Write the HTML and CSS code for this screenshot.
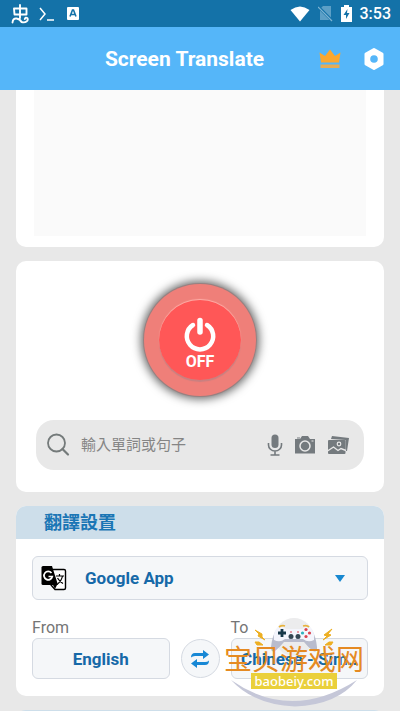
FILE: index.html
```html
<!DOCTYPE html>
<html lang="zh-Hant">
<head>
<meta charset="utf-8">
<meta name="viewport" content="width=device-width, initial-scale=1">
<title>Screen Translate</title>
<link rel="stylesheet" href="styles.css">
</head>
<body>
<div class="status">
  <div class="status-group">
    <svg width="18" height="20" viewBox="0 0 18 20" fill="none" stroke="#fff" stroke-width="1.900" stroke-linecap="round" stroke-linejoin="round"><path d="M9 1v13M3 4.500h12.500v6H3.500zM1.500 18.500Q2 14 5.500 14.500T10.500 18q3 1 5-.5t.8-3.500q-1.800-1-2.500 1"/></svg>
    <svg width="16" height="14" viewBox="0 0 16 14" fill="none" stroke="#fff" stroke-width="1.500"><path d="M1 1l5 6-5 6M8 13h7"/></svg>
    <svg class="status-app" width="12" height="13" viewBox="0 0 12 13"><rect width="12" height="13" rx="1" fill="#fff"/><path d="M3 9.500L5.500 3h1L9 9.500M4 7.500h4" fill="none" stroke="#1472a8" stroke-width="1.600"/></svg>
  </div>
  <div class="status-group status-right">
    <svg width="20" height="16" viewBox="0 0 20 16"><path d="M0.500 4Q10-3 19.500 4L10 15.500z" fill="#fff"/></svg>
    <svg width="15" height="17" viewBox="0 0 15 17"><path d="M5 1h8v14H2V4z" fill="#5c9fc6"/><path d="M0 1.500L14.500 16" stroke="#1472a8" stroke-width="3"/><path d="M0 2L14 16" stroke="#7db3d2" stroke-width="1.200"/></svg>
    <svg width="11" height="17" viewBox="0 0 11 17"><path d="M3 0h5v2h3v15H0V2h3z" fill="#fff"/><path d="M6.500 4L2.500 10h2.500v4L8.500 8H6z" fill="#1472a8"/></svg>
    <span class="clock">3:53</span>
  </div>
</div>
<header class="topbar">
  <h1 class="title">Screen Translate</h1>
  <div class="topbar-actions">
    <button class="icon-button" aria-label="Premium"><svg width="22" height="20" viewBox="0 0 22 20" fill="#fba72f"><path d="M2 13.500L0.500 3.500L6 7L11 0.500L16 7l5.500-3.500L20 13.500z"/><path d="M1.500 15.500h19v3.500h-19z" fill="#e5ac55"/></svg></button>
    <button class="icon-button" aria-label="Settings"><svg width="22" height="24" viewBox="0 0 22 24"><path d="M11 2.500l8 4.500v10l-8 4.500L3 17V7z" fill="#fff" stroke="#fff" stroke-width="3" stroke-linejoin="round"/><circle cx="11" cy="12" r="3.800" fill="#55b6f9"/></svg></button>
  </div>
</header>
<main class="content">
  <section class="card preview"><div class="preview-box"></div></section>

  <section class="card control">
    <button class="power"><span class="power-inner">
      <svg width="34" height="36" viewBox="0 0 34 36" fill="none" stroke="#fff" stroke-linecap="round"><path d="M10 9A13.200 13.200 0 1 0 24 9" stroke-width="4.500"/><path d="M17 4.500v11.500" stroke-width="5.500"/></svg>
      <span>OFF</span></span></button>
    <div class="search">
      <svg width="24" height="24" viewBox="0 0 24 24" fill="none" stroke="#747a7a" stroke-width="1.800" stroke-linecap="round"><circle cx="9.500" cy="10" r="8.500"/><path d="M15.500 16l5.500 5.500" stroke-width="2.200"/></svg>
      <input class="search-input" type="text" aria-label="輸入單詞或句子" placeholder="輸入單詞或句子">
      <div class="search-actions">
        <button class="icon-button" aria-label="Voice"><svg width="16" height="22" viewBox="0 0 16 22"><rect x="4.500" y="0.500" width="7" height="13.500" rx="3.500" fill="#747a7e"/><path d="M1.500 9v2a6.500 6 0 0 0 13 0V9M8 17v4M3.500 21h9" fill="none" stroke="#747a7e" stroke-width="1.600"/></svg></button>
        <button class="icon-button" aria-label="Camera"><svg width="22" height="18" viewBox="0 0 22 18"><path d="M1 3h5l2-3h6l2 3h5v14.500H1zM3 1.500h3v1H3z" fill="#747a7e"/><circle cx="11" cy="10" r="5" fill="#747a7e" stroke="#e8e8e8" stroke-width="1.500"/><path d="M17.500 5h2" stroke="#e8e8e8"/></svg></button>
        <button class="icon-button" aria-label="Gallery"><svg width="23" height="20" viewBox="0 0 23 20"><path d="M4 4l1-3 17 2-2 13h-1.500V5z" fill="#747a7e"/><rect x="1" y="5" width="17.500" height="14" rx="1" fill="#747a7e"/><circle cx="12" cy="9" r="1.800" fill="none" stroke="#e8e8e8" stroke-width="1.200"/><path d="M0.500 16l6-4 4.500 3.500 3-2 5 2" fill="none" stroke="#e8e8e8" stroke-width="1.400"/></svg></button>
      </div>
    </div>
  </section>

  <section class="card settings">
    <h2 class="card-title">翻譯設置</h2>
    <div class="settings-body">
      <label class="engine">
        <svg width="26" height="26" viewBox="0 0 26 26" fill="none"><path d="M10 4.500h13q1.500 0 1.500 1.500v17q0 1.500-1.500 1.500H14L10 20z" fill="#fff" stroke="#000" stroke-width="1.400"/><path d="M2 1h9l6 19H2q-1.500 0-1.500-1.500v-16Q.5 1 2 1z" fill="#000"/><path d="M10.500 8a4.200 4.200 0 1 0 .8 3.500H7.500" stroke="#fff" stroke-width="1.700"/><path d="M15 11h8M18.500 9v2M21.500 11q-1 5-5 8M16.500 13q2 3.500 5.500 5.500" stroke="#000" stroke-width="1.200"/><path d="M12 20h4l-2 4z" fill="#000"/></svg>
        <select class="engine-select" aria-label="Translation engine"><option>Google App</option></select>
        <svg width="10" height="7" viewBox="0 0 10 7"><path d="M0 0h10L5 7z" fill="#1888d0"/></svg>
      </label>
      <div class="languages">
        <div class="language"><label class="language-label" for="from">From</label><button class="language-button" id="from">English</button></div>
        <button class="swap" aria-label="Swap languages"><svg width="20" height="18" viewBox="0 0 20 18" fill="#1888d5"><path d="M1 7.500Q1 3 5 3h8V0l6 4.500L13 9V6H5Q2.500 6 1 7.500zM19 10.500q0 4.500-4 4.500H7v3l-6-4.500L7 9v3h8q2.500 0 4-1.500z"/></svg></button>
        <div class="language"><label class="language-label" for="to">To</label><button class="language-button" id="to">Chinese - Sim..</button></div>
      </div>
    </div>
  </section>
  <section class="card next"></section>
</main>
<div class="watermark">
  <svg class="watermark-art" width="136" height="94" viewBox="0 0 136 94" fill="none">
    <path d="M5 63Q65 105 131 63Q111 88 69 89.500Q28 88 5 63z" fill="#c5c7d8"/>
    <circle cx="68" cy="20" r="19" fill="#ececed"/>
    <path d="M50 13q4-4 9-1h18q6-3 9 1 4 7 5 17 .5 6-4 4-5-4-9-9H58q-4 5-9 9-4 2-4-4 1-10 5-17z" fill="#b9bccd"/>
    <path d="M51 11q5-3 9 1h16q5-4 9-1 4 4 3 12-6 3-11-1H59q-5 4-11 1-1-8 3-12z" fill="#f4f5fc"/>
    <path d="M53 10q3-2 6-1M77 9q4-1 6 1" stroke="#e8b33d" stroke-width="1.800"/>
    <path d="M56 12v8M52 16h8" stroke="#173849" stroke-width="2.800"/>
    <circle cx="65" cy="19.500" r="2.500" fill="#344653"/><circle cx="72" cy="19.500" r="2.500" fill="#344653"/>
    <circle cx="80" cy="12.500" r="1.600" fill="#da4450"/><circle cx="80" cy="19.500" r="1.600" fill="#da4450"/><circle cx="76.500" cy="16" r="1.600" fill="#2eb1bd"/><circle cx="83.500" cy="16" r="1.600" fill="#da4450"/>
    <path d="M64 15h2M71 15h2" stroke="#da4450"/>
    <path d="M29 13l7 4v3l3 3-7-4 1-2zM106 12l-8 6 3 1-4 4 8-5-3-1zM29 25l4 0 4 3-6 0zM107 25l-4 0-4 3 6 0z" fill="#edaf22" stroke="#edaf22"/>
  </svg>
  <div class="watermark-name">宝贝游戏网</div>
  <div class="watermark-url">baobeiy.com</div>
</div>
</body>
</html>
```
FILE: styles.css
```css
* {
  box-sizing: border-box;
}

body {
  margin: 0;
  height: 100vh;
  overflow: hidden;
  position: relative;
  display: flex;
  flex-direction: column;
  background: #e8e8e8;
  font-family: Roboto, "Noto Sans CJK TC", sans-serif;
}

svg {
  display: block;
  flex: none;
}

button,
input,
select {
  font: inherit;
  color: inherit;
  border: 0;
  padding: 0;
  margin: 0;
  background: none;
}

.status {
  flex: none;
  height: 27px;
  padding: 0 9px 0 11px;
  display: flex;
  justify-content: space-between;
  align-items: center;
  background: #1472a8;
}

.status-group {
  display: flex;
  align-items: center;
  gap: 10px;
}

.status-app {
  margin-left: 2px;
}

.status-right {
  gap: 8px;
}

.clock {
  color: #fff;
  font-size: 16px;
  font-weight: 500;
}

.topbar {
  flex: none;
  height: 63px;
  padding: 0 15px 0 50px;
  display: flex;
  align-items: center;
  background: #55b6f9;
}

.title {
  flex: 1;
  margin: 0;
  color: #fff;
  font-size: 21px;
  font-weight: 700;
  text-align: center;
}

.topbar-actions {
  display: flex;
  align-items: center;
  gap: 22px;
}

.content {
  flex: 1;
  min-height: 0;
  overflow: hidden;
  padding: 0 16px;
  display: flex;
  flex-direction: column;
  gap: 14px;
}

.card {
  flex: none;
  border-radius: 10px;
  background: #fff;
}

.preview {
  padding: 0 18px 11px;
  border-radius: 0 0 10px 10px;
}

.preview-box {
  height: 146px;
  background: #fafafa;
}

.control {
  padding: 23px 20px 22px;
  display: flex;
  flex-direction: column;
  align-items: center;
  gap: 24px;
}

.power {
  width: 112px;
  height: 112px;
  border-radius: 50%;
  display: flex;
  align-items: center;
  justify-content: center;
  background: #ef7f79;
  box-shadow: 0 0 0 1px #998080, 0 0 10px 3px #666;
}

.power-inner {
  width: 82px;
  height: 80px;
  padding-top: 8px;
  border-radius: 50%;
  display: flex;
  flex-direction: column;
  align-items: center;
  justify-content: center;
  background: #ff5757;
  box-shadow: 0 -1px 1px #ffb0aa, 0 2px 1px #c98080;
  color: #fff;
  font-size: 16px;
  font-weight: 700;
  line-height: 20px;
}

.search {
  align-self: stretch;
  height: 50px;
  padding: 0 14px 0 11px;
  border-radius: 18px;
  display: flex;
  align-items: center;
  gap: 10px;
  background: #e8e8e8;
}

.search-input {
  flex: 1;
  min-width: 0;
  outline: 0;
  font-size: 15px;
}

.search-input::placeholder {
  color: #858585;
}

.search-actions {
  display: flex;
  align-items: center;
  gap: 11px;
}

.card-title {
  margin: 0;
  height: 33px;
  padding: 0 28px;
  border-radius: 10px 10px 0 0;
  background: #cddeea;
  color: #1a76b5;
  font-size: 18px;
  font-weight: 700;
  line-height: 33px;
}

.settings-body {
  padding: 17px 16px;
}

.engine,
.language-button,
.swap {
  border: 1px solid #d5dae2;
  border-radius: 6px;
  background: #f5f7f9;
}

.engine {
  height: 44px;
  padding: 0 22px 0 8px;
  display: flex;
  align-items: center;
  gap: 18px;
}

.engine-select {
  flex: 1;
  appearance: none;
  outline: 0;
}

.engine-select,
.language-button {
  color: #1669a8;
  font-size: 17px;
  font-weight: 700;
}

.languages {
  margin-top: 18px;
  display: flex;
  align-items: flex-end;
  gap: 11px;
}

.language {
  flex: 1;
  min-width: 0;
}

.language-label {
  display: block;
  color: #757575;
  font-size: 16px;
  line-height: 20px;
}

.language-button {
  display: block;
  width: 100%;
  height: 41px;
  white-space: nowrap;
}

.swap {
  flex: none;
  width: 39px;
  height: 39px;
  margin-bottom: 1px;
  border-radius: 50%;
  display: flex;
  align-items: center;
  justify-content: center;
}

.next {
  height: 60px;
  background: #cddeea;
}

.watermark {
  position: absolute;
  left: 226px;
  bottom: 4px;
  width: 136px;
  height: 90px;
  padding-top: 26px;
  display: flex;
  flex-direction: column;
  align-items: center;
  pointer-events: none;
}

.watermark-art {
  position: absolute;
  top: 0;
  left: 0;
}

.watermark-name {
  position: relative;
  color: #e58a22;
  font-family: "Noto Sans CJK SC", sans-serif;
  font-size: 28px;
  line-height: 30px;
  white-space: nowrap;
}

.watermark-url {
  position: relative;
  width: 86px;
  background: #ead03b;
  color: #fff;
  font-family: "Noto Sans", sans-serif;
  font-size: 13px;
  font-weight: 500;
  line-height: 16px;
  text-align: center;
}
```
